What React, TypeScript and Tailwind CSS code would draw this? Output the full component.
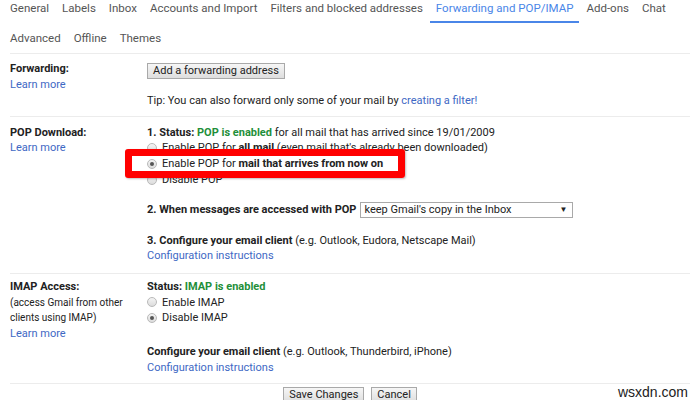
import React from "react";

const tabsTop = ["General", "Labels", "Inbox", "Accounts and Import", "Filters and blocked addresses", "Forwarding and POP/IMAP", "Add-ons", "Chat"];
const tabsBottom = ["Advanced", "Offline", "Themes"];

const Radio = ({ checked = false }: { checked?: boolean }) => (
  <span className="mr-[5px] inline-flex h-[10px] w-[10px] shrink-0 items-center justify-center rounded-full border border-[#b9b9b9] bg-gradient-to-b from-[#f4f4f4] to-[#dcdcdc]">
    {checked && <span className="h-[4px] w-[4px] rounded-full bg-[#555]" />}
  </span>
);

const Btn = ({ children }: { children: React.ReactNode }) => (
  <button className="h-[16px] border border-[#a9a9a9] bg-gradient-to-b from-[#f6f6f6] to-[#dedede] px-[5px] text-[11px] leading-[14px] text-[#222]">
    {children}
  </button>
);

const Link = ({ children }: { children: React.ReactNode }) => <span className="text-[#3e68c4]">{children}</span>;

export default function App() {
  return (
    <div className="relative h-[400px] w-[700px] overflow-hidden bg-white font-['Roboto',sans-serif] text-[11px] leading-[15.7px] text-[#222]">
      {/* tabs */}
      <div className="flex h-[23px] gap-[13px] whitespace-nowrap px-[10px] text-[11.5px] leading-[16px] text-[#555]">
        {tabsTop.map((t) => (
          <div
            key={t}
            className={t === "Forwarding and POP/IMAP" ? "-mx-[6px] h-[23px] border-b-2 border-[#4a86e8] px-[6px] text-[#4a86e8]" : "h-[23px]"}
          >
            {t}
          </div>
        ))}
      </div>
      <div className="mt-[7px] flex h-[23px] gap-[13px] px-[10px] text-[11.5px] leading-[16px] text-[#555]">
        {tabsBottom.map((t) => (
          <div key={t}>{t}</div>
        ))}
      </div>

      <div className="mx-[10px] border-t border-[#ececec]">
        {/* Forwarding */}
        <div className="flex border-b border-[#ececec] pb-[7px] pt-[7px]">
          <div className="w-[137px] shrink-0">
            <div className="font-bold">Forwarding:</div>
            <Link>Learn more</Link>
          </div>
          <div>
            <div className="mt-[2px]">
              <Btn>Add a forwarding address</Btn>
            </div>
            <div className="mt-[14px]">
              Tip: You can also forward only some of your mail by <Link>creating a filter!</Link>
            </div>
          </div>
        </div>

        {/* POP */}
        <div className="flex border-b border-[#ececec] pb-[9px] pt-[8px]">
          <div className="w-[137px] shrink-0">
            <div className="font-bold">POP Download:</div>
            <Link>Learn more</Link>
          </div>
          <div>
            <div>
              <b>1. Status: </b>
              <b className="text-[#1f8f3a]">POP is enabled</b> for all mail that has arrived since 19/01/2009
            </div>
            <div className="flex items-center">
              <Radio />
              <span>
                Enable POP for <b>all mail</b> (even mail that's already been downloaded)
              </span>
            </div>
            <div className="relative flex items-center">
              <Radio checked />
              <span>
                Enable POP for <b>mail that arrives from now on</b>
              </span>
              <div className="absolute left-[-22px] top-[-7px] h-[29px] w-[280px] rounded-[3px] border-[7px] border-[#f00] shadow-[1px_1px_2px_rgba(0,0,0,0.25)]" />
            </div>
            <div className="flex items-center">
              <Radio />
              <span>Disable POP</span>
            </div>
            <div className="mt-[14px] flex items-center">
              <b>2. When messages are accessed with POP</b>
              <div className="ml-[4px] flex h-[16px] w-[213px] items-center justify-between border border-[#a9a9a9] pl-[3px] pr-[5px] leading-[14px]">
                <span>keep Gmail's copy in the Inbox</span>
                <span className="text-[8px]">▼</span>
              </div>
            </div>
            <div className="mt-[15px]">
              <b>3. Configure your email client</b> (e.g. Outlook, Eudora, Netscape Mail)
            </div>
            <Link>Configuration instructions</Link>
          </div>
        </div>

        {/* IMAP */}
        <div className="flex border-b border-[#ececec] pb-[8px] pt-[5px]">
          <div className="w-[137px] shrink-0">
            <div className="font-bold">IMAP Access:</div>
            <div className="text-[10px]">(access Gmail from other</div>
            <div className="text-[10px]">clients using IMAP)</div>
            <Link>Learn more</Link>
          </div>
          <div>
            <div className="font-bold">
              Status: <span className="text-[#1f8f3a]">IMAP is enabled</span>
            </div>
            <div className="flex items-center">
              <Radio />
              <span>Enable IMAP</span>
            </div>
            <div className="flex items-center">
              <Radio checked />
              <span>Disable IMAP</span>
            </div>
            <div className="mt-[18px]">
              <b>Configure your email client</b> (e.g. Outlook, Thunderbird, iPhone)
            </div>
            <Link>Configuration instructions</Link>
          </div>
        </div>

        <div className="flex justify-center gap-[7px] pt-[3px]">
          <Btn>Save Changes</Btn>
          <Btn>Cancel</Btn>
        </div>
      </div>

      <div className="absolute bottom-[-1px] right-[12px] font-['Liberation_Sans',sans-serif] text-[14px] text-[#222]">wsxdn.com</div>
    </div>
  );
}
